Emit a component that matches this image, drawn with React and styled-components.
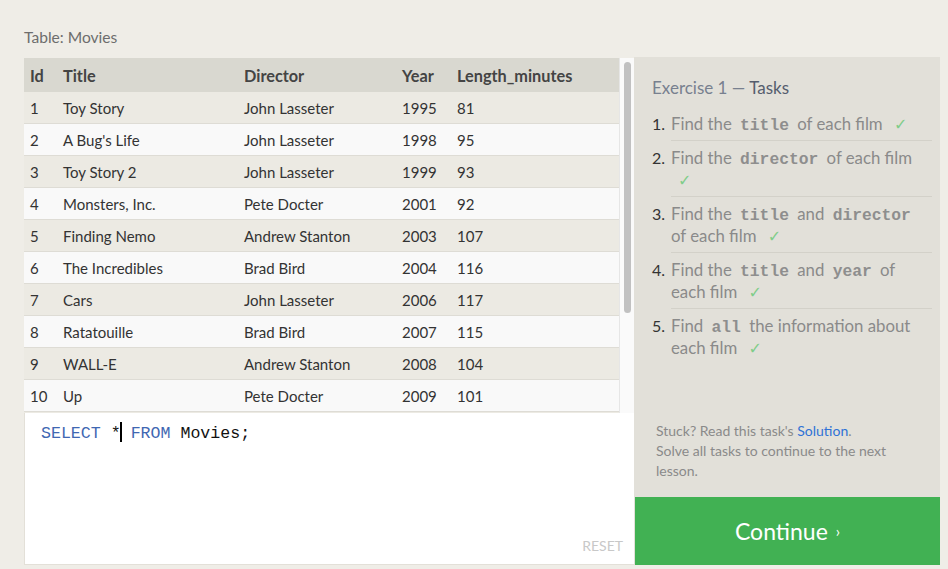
import React from "react";
import styled, { createGlobalStyle } from "styled-components";

const Global = createGlobalStyle`
  html, body { margin: 0; padding: 0; background: #efede7; }
  body { font-family: Lato, "Noto Sans", sans-serif; }
`;

const Page = styled.div`
  width: 948px;
  height: 569px;
  padding: 27px 8px 4px 24px;
  box-sizing: border-box;
  display: flex;
  flex-direction: column;
`;

const Label = styled.div`
  font-size: 15.6px;
  line-height: 20px;
  color: #6d6d6d;
  margin-bottom: 10px;
`;

const Main = styled.div`
  display: flex;
  flex: 1;
  min-height: 0;
`;

const LeftCol = styled.div`
  width: 610px;
  display: flex;
  flex-direction: column;
`;

const TableArea = styled.div`
  height: 355px;
  margin-top: 1px;
  display: flex;
  background: #fafafa;
`;

const TableClip = styled.div`
  flex: 1;
  overflow: hidden;
  border-right: 1px solid #e6e6e6;
`;

const ScrollTrack = styled.div`
  width: 14px;
  flex: none;
  padding: 4px 3px 0 4px;
  box-sizing: border-box;
`;

const ScrollThumb = styled.div`
  height: 251px;
  border-radius: 4px;
  background: #c1c1c1;
`;

const Table = styled.table`
  width: 100%;
  border-collapse: collapse;
  font-size: 15px;
  color: #333;
`;

const HeadCell = styled.th`
  text-align: left;
  font-weight: 700;
  font-size: 16.3px;
  color: #444;
  background: #d9d8d0;
  height: 34px;
  padding: 0 0 0 6px;
  box-sizing: border-box;
`;

const Row = styled.tr`
  background: ${(p) => (p.$odd ? "#eceae3" : "#f9f9f9")};
  border-bottom: 1px solid #dedcd5;
`;

const Cell = styled.td`
  height: 31px;
  padding: 0 0 0 6px;
`;

const Editor = styled.div`
  flex: 1;
  background: #fff;
  position: relative;
  padding: 9px 16px;
  box-sizing: border-box;
  border-left: 1px solid #e3e0d8;
  border-bottom: 1px solid #e3e0d8;
  font-family: "Liberation Mono", "Courier New", monospace;
  font-size: 16.6px;
  line-height: 22px;
  color: #111;
`;

const Keyword = styled.span`
  color: #3f67b2;
`;

const Caret = styled.span`
  display: inline-block;
  width: 2px;
  height: 20px;
  background: #000;
  vertical-align: -4px;
  margin: 0 -1px 0 -1px;
`;

const Reset = styled.div`
  position: absolute;
  right: 11px;
  bottom: 9px;
  font-family: Lato, "Noto Sans", sans-serif;
  font-size: 14px;
  line-height: 18px;
  color: #c8c8c8;
`;

const Panel = styled.div`
  width: 306px;
  background: #e2e0d9;
  display: flex;
  flex-direction: column;
`;

const PanelBody = styled.div`
  flex: 1;
  padding: 20px 8px 0 18px;
`;

const Heading = styled.div`
  font-size: 17px;
  line-height: 22px;
  color: #78808f;
  margin-bottom: 8px;
  & b { color: #555d6e; font-weight: 400; }
`;

const TaskList = styled.ol`
  list-style: none;
  margin: 0;
  padding: 0;
`;

const Task = styled.li`
  display: flex;
  font-size: 16.8px;
  line-height: 22px;
`;

const Num = styled.span`
  width: 19px;
  flex: none;
  color: #333;
  font-size: 16px;
  padding-top: 6px;
`;

const TaskText = styled.div`
  flex: 1;
  color: #8a8a8a;
  padding: 6px 8px 5px 0;
  border-bottom: ${(p) => (p.$last ? "none" : "1px solid #d3d1c9")};
`;

const Code = styled.code`
  font-family: "Liberation Mono", "Courier New", monospace;
  font-weight: 700;
  font-size: 16.3px;
  line-height: 14px;
  color: #8e8e8e;
  padding: 0 4px;
`;

const Check = styled.span`
  color: #80cd89;
  margin-left: 7px;
  font-family: "DejaVu Sans", sans-serif;
  font-size: 16px;
  line-height: 14px;
`;

const Help = styled.div`
  padding: 0 30px 16px 22px;
  font-size: 14px;
  line-height: 20px;
  color: #8a8a8a;
  & a { color: #2f72d6; text-decoration: none; }
`;

const ContinueBtn = styled.button`
  height: 68px;
  border: none;
  background: #41b153;
  color: #fff;
  font-family: Lato, "Noto Sans", sans-serif;
  font-size: 23px;
  margin-left: 1px;
  cursor: pointer;
  display: flex;
  align-items: center;
  justify-content: center;
  gap: 8px;
  & small { font-size: 15px; }
`;

const movies = [
  [1, "Toy Story", "John Lasseter", 1995, 81],
  [2, "A Bug's Life", "John Lasseter", 1998, 95],
  [3, "Toy Story 2", "John Lasseter", 1999, 93],
  [4, "Monsters, Inc.", "Pete Docter", 2001, 92],
  [5, "Finding Nemo", "Andrew Stanton", 2003, 107],
  [6, "The Incredibles", "Brad Bird", 2004, 116],
  [7, "Cars", "John Lasseter", 2006, 117],
  [8, "Ratatouille", "Brad Bird", 2007, 115],
  [9, "WALL-E", "Andrew Stanton", 2008, 104],
  [10, "Up", "Pete Docter", 2009, 101],
  [11, "Toy Story 3", "Lee Unkrich", 2010, 103],
  [12, "Cars 2", "John Lasseter", 2011, 120],
  [13, "Brave", "Brenda Chapman", 2012, 102],
  [14, "Monsters University", "Dan Scanlon", 2013, 110],
];

const tasks = [
  <>Find the <Code>title</Code> of each film</>,
  <>Find the <Code>director</Code> of each film</>,
  <>Find the <Code>title</Code> and <Code>director</Code> of each film</>,
  <>Find the <Code>title</Code> and <Code>year</Code> of each film</>,
  <>Find <Code>all</Code> the information about each film</>,
];

export default function App() {
  return (
    <>
      <Global />
      <Page>
        <Label>Table: Movies</Label>
        <Main>
          <LeftCol>
            <TableArea>
              <TableClip>
                <Table>
                  <colgroup>
                    <col style={{ width: 33 }} />
                    <col style={{ width: 181 }} />
                    <col style={{ width: 158 }} />
                    <col style={{ width: 55 }} />
                    <col />
                  </colgroup>
                  <thead>
                    <tr>
                      <HeadCell>Id</HeadCell>
                      <HeadCell>Title</HeadCell>
                      <HeadCell>Director</HeadCell>
                      <HeadCell>Year</HeadCell>
                      <HeadCell>Length_minutes</HeadCell>
                    </tr>
                  </thead>
                  <tbody>
                    {movies.map((m, i) => (
                      <Row key={m[0]} $odd={i % 2 === 0}>
                        {m.map((v, j) => (
                          <Cell key={j}>{v}</Cell>
                        ))}
                      </Row>
                    ))}
                  </tbody>
                </Table>
              </TableClip>
              <ScrollTrack>
                <ScrollThumb />
              </ScrollTrack>
            </TableArea>
            <Editor>
              <Keyword>SELECT</Keyword> *<Caret /> <Keyword>FROM</Keyword> Movies;
              <Reset>RESET</Reset>
            </Editor>
          </LeftCol>
          <Panel>
            <PanelBody>
              <Heading>
                Exercise 1 — <b>Tasks</b>
              </Heading>
              <TaskList>
                {tasks.map((t, i) => (
                  <Task key={i}>
                    <Num>{i + 1}.</Num>
                    <TaskText $last={i === tasks.length - 1}>
                      {t}{" "}
                      <Check>✓</Check>
                    </TaskText>
                  </Task>
                ))}
              </TaskList>
            </PanelBody>
            <Help>
              Stuck? Read this task's <a href="#">Solution</a>.
              <br />
              Solve all tasks to continue to the next lesson.
            </Help>
            <ContinueBtn>
              Continue <small>›</small>
            </ContinueBtn>
          </Panel>
        </Main>
      </Page>
    </>
  );
}
